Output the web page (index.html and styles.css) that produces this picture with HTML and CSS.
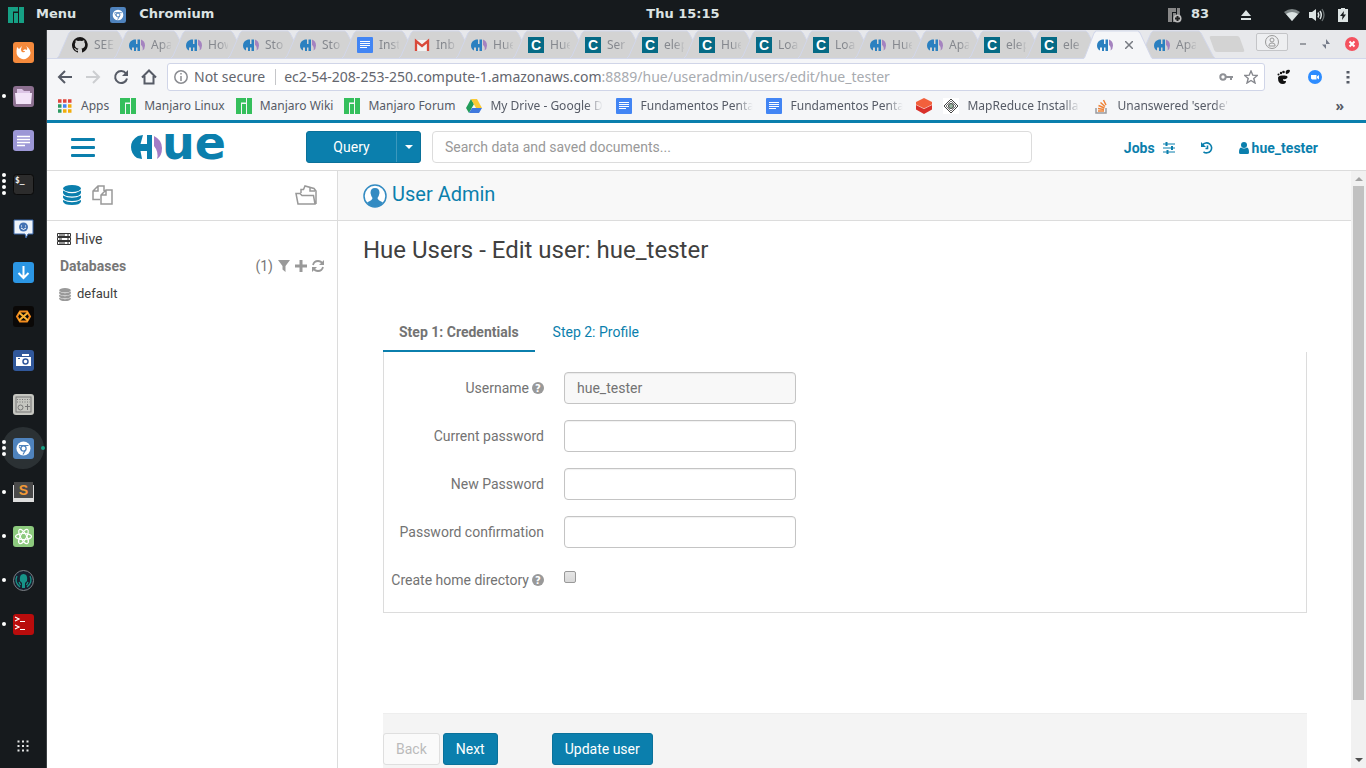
FILE: index.html
```html
<!DOCTYPE html>
<html lang="en">
<head>
<meta charset="utf-8">
<title>Hue - User Admin</title>
<link rel="stylesheet" href="styles.css">
</head>
<body>
<svg class="defs" aria-hidden="true">
  <symbol id="tab" viewBox="0 0 76 28" preserveAspectRatio="none"><path d="M0 28 L2 26 L12 3 L14 1 H60 L62 3 L74 26 L76 28"/></symbol>
  <symbol id="hue" viewBox="0 0 16 16"><path fill="#2b80c0" d="M5 2.500Q0 4 0 8.500Q0 12 3 13.500V10.500H5V14H7V10.500H8.500V14H11V2.500H8.500V7H7V2.500Z"/><path fill="#a583c0" d="M12 2.500Q16 4 16 8.500Q16 12 13.500 13.500Q14.500 10 12 8Z"/></symbol>
  <symbol id="doc" viewBox="0 0 16 16"><rect width="16" height="16" rx="1" fill="#4285f4"/><path stroke="#fff" d="M3 4.500h10M3 6.500h10M3 8.500h10M3 10.500h7"/></symbol>
  <symbol id="cdh" viewBox="0 0 16 16"><rect width="16" height="16" fill="#056a85"/><text x="8" y="13" text-anchor="middle" font-family="Liberation Sans" font-size="14" font-weight="bold" fill="#fff">C</text></symbol>
  <symbol id="manjaro" viewBox="0 0 16 16"><path fill="currentColor" d="M0 0H10V4.500H5V16H0ZM6 6H10V16H6ZM11 0H16V16H11Z"/></symbol>
  <symbol id="chromium" viewBox="0 0 21 21"><rect x="0" y="0" width="21" height="21" rx="3" fill="#4f83bd"/><circle cx="10.500" cy="10.500" r="7" fill="#fff"/><circle cx="10.500" cy="10.500" r="2.600" fill="none" stroke="#4f83bd" stroke-width="1.300"/><path fill="none" stroke="#4f83bd" stroke-width="1.200" d="M6 7.500H15.500M8.500 12L6 8.500M12.500 12L10 16.500"/></symbol>
  <symbol id="db" viewBox="0 0 18 20"><ellipse cx="9" cy="3.500" rx="9" ry="3.500"/><path d="M0 5.500Q9 11 18 5.500V8Q17 11.500 9 11.500T0 8ZM0 10.500Q9 15 18 10.500V12.500Q17 16 9 16T0 12.500ZM0 15Q9 19.500 18 15V16.500Q17 20 9 20T0 16.500Z"/></symbol>
  <symbol id="help" viewBox="0 0 12 12"><circle cx="6" cy="6" r="6" fill="#999"/><text x="6" y="10" text-anchor="middle" font-family="DejaVu Sans" font-size="10" font-weight="bold" fill="#fff">?</text></symbol>
</svg>

<header class="panel">
  <div class="panel-left">
    <svg class="i16 teal"><use href="#manjaro"/></svg><span class="menu-label">Menu</span>
    <svg class="i16 app-icon"><use href="#chromium"/></svg><span>Chromium</span>
  </div>
  <time>Thu 15:15</time>
  <div class="panel-right">
    <svg width="14" height="16" viewBox="0 0 14 16"><path fill="#888" d="M0 1H8V5H4V15H0ZM5 6H8V15H5ZM9 1H12V14H9Z"/><circle cx="9.500" cy="11.500" r="4" fill="#bbb"/><path stroke="#222" stroke-width="2" d="M7 11.500h5M9.500 9v5"/></svg>
    <span class="count">83</span>
    <svg class="eject" width="10" height="10" viewBox="0 0 10 10"><path fill="#dce3e3" d="M5 0L10 6H0ZM0 8H10V10H0Z"/></svg>
    <svg class="wifi" width="16" height="14" viewBox="0 0 16 14"><path fill="#7d8586" d="M8 13L0 4Q8-2 16 4Z"/><path fill="#dce3e3" d="M8 13L2 6Q8 2 14 6Z"/></svg>
    <svg class="sound" width="16" height="14" viewBox="0 0 16 14"><path fill="#dce3e3" d="M0 4H3L7 1V13L3 10H0Z"/><path fill="none" stroke="#dce3e3" stroke-width="1.500" d="M9 4.500Q10.500 7 9 9.500M11 3Q13.500 7 11 11"/><path fill="none" stroke="#697071" stroke-width="1.300" d="M13 1Q17 7 13 13"/></svg>
    <svg width="10" height="14" viewBox="0 0 10 14"><path fill="#dce3e3" d="M0 1H3V0H7V1H10V14H0Z"/><path fill="#161a1d" d="M6 3L2 8H4.500L4 12L8 6.500H5.500Z"/></svg>
  </div>
</header>

<div class="desktop">
<nav class="dock">
  <a href="#" class="app" title="Firefox"><svg viewBox="0 0 21 21"><rect width="21" height="21" rx="3" fill="#f58a3c"/><path fill="#fff" d="M4 5L6 7L9 4Q7 8 9 10Q12 11 12 9H10Q11 6 14 8Q15 6 13 4Q19 8 17 13Q14 18 9 17Q3 15 3.500 9Z"/></svg></a>
  <a href="#" class="app" title="Files"><span class="dots"><i></i></span><svg viewBox="0 0 21 21"><rect width="21" height="21" rx="3" fill="#8c7090"/><path fill="#dcc5e6" d="M4 3H9L11 5H17V8H4Z"/><path fill="#f2e4f8" d="M2 7H19L18 18H3Z"/></svg></a>
  <a href="#" class="app" title="Editor"><svg viewBox="0 0 21 21"><rect width="21" height="21" rx="3" fill="#9c97d6"/><path stroke="#fff" stroke-width="1.300" d="M4 6.500H17M4 9.500H17M4 12.500H17M4 15.500H12"/></svg></a>
  <a href="#" class="app" title="Terminal"><span class="dots"><i></i><i></i><i></i><i></i></span><svg viewBox="0 0 21 21"><rect x=".5" y=".5" width="20" height="20" rx="3" fill="#2c2c2c" stroke="#0b0b0b"/><text x="2" y="9" font-family="DejaVu Sans Mono" font-weight="bold" font-size="8" fill="#eee">$_</text></svg></a>
  <a href="#" class="app" title="Chat"><svg viewBox="0 0 21 21"><path fill="#eef4fb" stroke="#3665a8" d="M1 2H20V16H15L13 20L12 16H1Z"/><circle cx="10.500" cy="9" r="4.500" fill="#4472b3"/><path fill="none" stroke="#fff" d="M8 8h1M12 8h1M8 10Q10.500 13 13 10"/></svg></a>
  <a href="#" class="app" title="Downloads"><svg viewBox="0 0 21 21"><rect width="21" height="21" rx="3" fill="#2b96e4"/><path fill="none" stroke="#fff" stroke-width="2" d="M10.500 4V16M5.500 11L10.500 16L15.500 11"/></svg></a>
  <a href="#" class="app" title="Hex"><svg viewBox="0 0 21 21"><rect width="21" height="21" rx="3" fill="#0a0807"/><g fill="none" stroke="#f38b1d" stroke-width="2"><path d="M7 5.500H14L17 10.500L14 15.500H7L4 10.500Z"/><path stroke="#fbb335" d="M6 6.500L15 14.500M15 6.500L6 14.500"/></g></svg></a>
  <a href="#" class="app" title="Screenshot"><svg viewBox="0 0 21 21"><rect width="21" height="21" rx="3" fill="#31589b"/><path fill="#fff" d="M3 7H18V16H3ZM9 4H16V6H9Z"/><circle cx="12.500" cy="11.500" r="2.500" fill="#fff" stroke="#31589b" stroke-width="1.500"/><path fill="#31589b" d="M5 8h2v1H5z"/></svg></a>
  <a href="#" class="app" title="Devices"><svg viewBox="0 0 21 21"><rect width="21" height="21" rx="3" fill="#c5c6c0"/><rect x="3" y="3" width="15" height="15" fill="none" stroke="#777"/><path stroke="#777" stroke-dasharray="1 1.500" d="M4 5.500H17M4 8H17"/><circle cx="7.500" cy="13.500" r="2.500" fill="none" stroke="#777"/><path stroke="#777" d="M12 12.500H17M14.500 10V16"/></svg></a>
  <a href="#" class="app current" title="Chromium"><span class="dots"><i></i><i></i><i></i></span><svg viewBox="0 0 21 21"><use href="#chromium"/></svg></a>
  <a href="#" class="app" title="Sublime Text"><span class="dots"><i></i></span><svg viewBox="0 0 21 21"><path fill="#ddd" d="M0 3H21V20H0Z"/><path fill="#4a4a4a" d="M1 0H20V16H1Z"/><text x="10.500" y="13" text-anchor="middle" font-family="Liberation Sans" font-weight="bold" font-size="14" fill="#f49a35">S</text></svg></a>
  <a href="#" class="app" title="Atom"><span class="dots"><i></i></span><svg viewBox="0 0 21 21"><rect width="21" height="21" rx="3" fill="#8dca7e"/><g fill="none" stroke="#fff" stroke-width="1.200"><ellipse cx="10.500" cy="10.500" rx="8" ry="3"/><ellipse cx="10.500" cy="10.500" rx="8" ry="3" transform="rotate(60 10.500 10.500)"/><ellipse cx="10.500" cy="10.500" rx="8" ry="3" transform="rotate(120 10.500 10.500)"/></g></svg></a>
  <a href="#" class="app" title="GitKraken"><span class="dots"><i></i></span><svg viewBox="0 0 21 21"><circle cx="10.500" cy="10.500" r="10" fill="#17202f" stroke="#7e8388"/><path fill="#179489" d="M7 11Q6 4 10.500 4T14 11L12 13V18H9V13Z"/><path fill="none" stroke="#179489" stroke-width="1.300" d="M4 6Q1 12 7 17M17 6Q20 12 14 17M6 12L7.500 15M15 12L13.500 15"/></svg></a>
  <a href="#" class="app" title="Terminator"><span class="dots"><i></i></span><svg viewBox="0 0 21 21"><rect width="21" height="21" rx="3" fill="#b90c0c"/><path fill="none" stroke="#fff" stroke-width="1.200" d="M2 3L6 5L2 7M7 7.500H12M2 11L6 13L2 15M7 15.500H12"/></svg></a>
  <button class="all-apps" aria-label="Show applications"><svg width="12" height="12" viewBox="0 0 12 12"><path stroke="#e4e6e6" stroke-width="2" stroke-dasharray="2 2.500" d="M.5 1.500H12M.5 6H12M.5 10.500H12"/></svg></button>
</nav>

<div class="browser">
  <div class="tabstrip">
    <div class="tab"><svg class="shape"><use href="#tab"/></svg><svg class="i16" viewBox="0 0 16 16"><path fill="#181616" d="M8 0a8 8 0 0 0-2.500 15.600c.4 0 .5-.2.500-.4v-1.500c-2.200.5-2.700-1-2.700-1-.4-.9-.9-1.200-.9-1.200-.7-.5 0-.5 0-.5.800 0 1.300.8 1.300.8.700 1.300 1.900.9 2.300.7 0-.5.300-.9.500-1.100-1.800-.2-3.600-.9-3.600-4 0-.9.300-1.600.8-2.100-.1-.2-.4-1 .1-2.100 0 0 .7-.2 2.200.8a8 8 0 0 1 4 0c1.500-1 2.200-.8 2.200-.8.400 1.100.1 1.900.1 2.100.5.600.8 1.300.8 2.100 0 3.100-1.900 3.800-3.700 4 .3.200.6.700.6 1.500v2.200c0 .2.100.5.500.4A8 8 0 0 0 8 0z"/></svg><span>SEE</span></div>
    <div class="tab"><svg class="shape"><use href="#tab"/></svg><svg class="i16"><use href="#hue"/></svg><span>Apa</span></div>
    <div class="tab"><svg class="shape"><use href="#tab"/></svg><svg class="i16"><use href="#hue"/></svg><span>How</span></div>
    <div class="tab"><svg class="shape"><use href="#tab"/></svg><svg class="i16"><use href="#hue"/></svg><span>Sto</span></div>
    <div class="tab"><svg class="shape"><use href="#tab"/></svg><svg class="i16"><use href="#hue"/></svg><span>Sto</span></div>
    <div class="tab"><svg class="shape"><use href="#tab"/></svg><svg class="i16"><use href="#doc"/></svg><span>Inst</span></div>
    <div class="tab"><svg class="shape"><use href="#tab"/></svg><svg class="i16" viewBox="0 0 16 16"><path fill="#f2f2f2" d="M1 3H15V14H1Z"/><path fill="none" stroke="#d9493a" stroke-width="2.300" d="M2 14V4L8 9L14 4V14"/></svg><span>Inb</span></div>
    <div class="tab"><svg class="shape"><use href="#tab"/></svg><svg class="i16"><use href="#hue"/></svg><span>Hue</span></div>
    <div class="tab"><svg class="shape"><use href="#tab"/></svg><svg class="i16"><use href="#cdh"/></svg><span>Hue</span></div>
    <div class="tab"><svg class="shape"><use href="#tab"/></svg><svg class="i16"><use href="#cdh"/></svg><span>Ser</span></div>
    <div class="tab"><svg class="shape"><use href="#tab"/></svg><svg class="i16"><use href="#cdh"/></svg><span>elep</span></div>
    <div class="tab"><svg class="shape"><use href="#tab"/></svg><svg class="i16"><use href="#cdh"/></svg><span>Hue</span></div>
    <div class="tab"><svg class="shape"><use href="#tab"/></svg><svg class="i16"><use href="#cdh"/></svg><span>Loa</span></div>
    <div class="tab"><svg class="shape"><use href="#tab"/></svg><svg class="i16"><use href="#cdh"/></svg><span>Loa</span></div>
    <div class="tab"><svg class="shape"><use href="#tab"/></svg><svg class="i16"><use href="#hue"/></svg><span>Hue</span></div>
    <div class="tab"><svg class="shape"><use href="#tab"/></svg><svg class="i16"><use href="#hue"/></svg><span>Apa</span></div>
    <div class="tab"><svg class="shape"><use href="#tab"/></svg><svg class="i16"><use href="#cdh"/></svg><span>elep</span></div>
    <div class="tab"><svg class="shape"><use href="#tab"/></svg><svg class="i16"><use href="#cdh"/></svg><span>ele</span></div>
    <div class="tab active"><svg class="shape"><use href="#tab"/></svg><svg class="i16"><use href="#hue"/></svg><button class="close-tab" aria-label="Close tab"><svg width="8" height="8" viewBox="0 0 8 8"><path stroke="#777b82" stroke-width="1.500" d="M0 0L8 8M8 0L0 8"/></svg></button></div>
    <div class="tab"><svg class="shape"><use href="#tab"/></svg><svg class="i16"><use href="#hue"/></svg><span>Apa</span></div>
    <button class="new-tab" aria-label="New tab"></button>
    <div class="window-controls">
      <button class="profile" aria-label="Profile"><svg width="14" height="14" viewBox="0 0 14 14"><g fill="none" stroke="#999"><circle cx="7" cy="7" r="6.500"/><circle cx="7" cy="5" r="2"/><path d="M4 10Q4 8 7 8T10 10V11H4Z"/></g></svg></button>
      <button aria-label="Minimize"><svg width="8" height="14" viewBox="0 0 8 14"><path stroke="#9a9da3" stroke-width="2" d="M1 7H7"/></svg></button>
      <button aria-label="Restore"><svg width="8" height="14" viewBox="0 0 8 14"><path fill="#747a88" d="M4 2V7H8ZM0 7.500H4V12Z"/></svg></button>
      <button aria-label="Close"><svg width="14" height="14" viewBox="0 0 14 14"><circle cx="7" cy="7" r="7" fill="#f4525f"/><path stroke="#fff" stroke-width="2" d="M4.500 4.500L9.500 9.500M9.500 4.500L4.500 9.500"/></svg></button>
    </div>
  </div>

  <div class="toolbar">
    <button aria-label="Back"><svg class="i16" viewBox="0 0 16 16"><path d="M15 8H2M8 2L2 8L8 14"/></svg></button>
    <button aria-label="Forward" class="off"><svg class="i16" viewBox="0 0 16 16"><path d="M1 8H14M8 2L14 8L8 14"/></svg></button>
    <button aria-label="Reload"><svg class="i16" viewBox="0 0 16 16"><path d="M13 4.500A6 6 0 1 0 14 9.500"/><path class="solid" d="M15 1V7H9Z"/></svg></button>
    <button aria-label="Home"><svg class="i16" viewBox="0 0 16 16"><path d="M1 8.500L8 1.500L15 8.500M3.500 7V14.500H12.500V7"/></svg></button>
    <div class="omnibox">
      <svg width="14" height="14" viewBox="0 0 14 14"><circle cx="7" cy="7" r="6.200" fill="none" stroke="#8a8c91" stroke-width="1.500"/><path stroke="#8a8c91" stroke-width="1.500" d="M7 6V11M7 3V4.500"/></svg>
      <span class="secure">Not secure</span>
      <span class="url">ec2-54-208-253-250.compute-1.amazonaws.com<span>:8889/hue/useradmin/users/edit/hue_tester</span></span>
      <svg width="14" height="10" viewBox="0 0 14 10"><g fill="none" stroke="#8f9196" stroke-width="2"><circle cx="4" cy="5" r="2.700"/><path d="M7 5H14M12 5V8"/></g></svg>
      <svg width="14" height="14" viewBox="0 0 14 14"><path fill="none" stroke="#85878d" stroke-width="1.400" d="M7 1L8.800 5.200L13.300 5.500L9.800 8.500L11 13L7 10.500L3 13L4.200 8.500L.7 5.500L5.200 5.200Z"/></svg>
    </div>
    <svg class="ext" width="14" height="16" viewBox="0 0 14 16"><path d="M1 9Q1 6 6 6.500Q11 6 10.500 8.500Q9 11 6.500 10Q5 11 7 12H9Q9 15 6 15Q1 15 1 9ZM10 1Q13 0 13 2Q12 5 9 5Q8 2 10 1Z"/><circle cx="6.500" cy="3" r="1.300"/><circle cx="4" cy="4" r="1.200"/><circle cx="1.500" cy="5.500" r="1"/></svg>
    <svg class="ext" width="14" height="14" viewBox="0 0 14 14"><circle cx="7" cy="7" r="7" fill="#2d8cff"/><path fill="#fff" d="M3 5H8.500V9.500H4L3 8.500ZM9 6.500L11 5V9.500L9 8Z"/></svg>
    <button aria-label="Menu" class="kebab"><svg width="4" height="14" viewBox="0 0 4 14"><path class="solid" d="M.5 1h3v2.500h-3zM.5 6h3v2.500h-3zM.5 11h3v2.500h-3z"/></svg></button>
  </div>

  <nav class="bookmarks">
    <a href="#"><svg class="i16" viewBox="0 0 16 16"><g stroke-width="3.500" stroke-dasharray="3.500 1.500"><path stroke="#e0463b" d="M1 3H15"/><path stroke="#2c9a62" d="M1 8H5"/><path stroke="#4285f4" d="M6 8H10"/><path stroke="#f2ad0b" d="M11 8H15M6 13H15"/><path stroke="#2c9a62" d="M1 13H5"/></g></svg><span>Apps</span></a>
    <a href="#"><svg class="i16 green"><use href="#manjaro"/></svg><span>Manjaro Linux</span></a>
    <a href="#"><svg class="i16 green"><use href="#manjaro"/></svg><span>Manjaro Wiki</span></a>
    <a href="#"><svg class="i16 green"><use href="#manjaro"/></svg><span>Manjaro Forum</span></a>
    <a href="#"><svg class="i16" viewBox="0 0 16 16"><path fill="#219c5a" d="M5 1L8 6L3 15L0 10Z"/><path fill="#fbca36" d="M5 1H11L16 10H10Z"/><path fill="#3f78de" d="M6 10H16L13 15H3Z"/></svg><span class="long">My Drive - Google Drive</span></a>
    <a href="#"><svg class="i16"><use href="#doc"/></svg><span class="long">Fundamentos Pentaho</span></a>
    <a href="#"><svg class="i16"><use href="#doc"/></svg><span class="long">Fundamentos Pentaho</span></a>
    <a href="#" aria-label="Databricks"><svg class="i16" viewBox="0 0 16 16"><path fill="#d9302a" d="M0 7L8 11L16 7V11.500L8 16L0 11.500Z"/><path fill="#f2603c" d="M8 0L16 4V6.500L8 10.500L0 6.500V4Z"/></svg></a>
    <a href="#"><svg class="i16" viewBox="0 0 16 16"><path fill="#fff" d="M0 0H16V16H0Z"/><path fill="#fff" stroke="#444" d="M8 1L15 8L8 15L1 8Z"/><path fill="#fff" stroke="#777" d="M8 3L13 8L8 13L3 8Z"/><circle cx="8" cy="8" r="2.500" fill="#9bb8a2" stroke="#444"/></svg><span class="long">MapReduce Installation</span></a>
    <a href="#"><svg class="i16" viewBox="0 0 16 16"><path fill="none" stroke="#999b9e" stroke-width="1.500" d="M3 10V15H13V10"/><path stroke="#ef8236" stroke-width="1.500" d="M5 13H11M5 10.500L11 11.500M5.500 7.500L11.500 10M7.500 4.500L12 8.500M10.500 2L13 7"/></svg><span class="long">Unanswered 'serde' q</span></a>
    <button class="more" aria-label="More bookmarks">»</button>
  </nav>

  <div class="hue-header">
    <button class="hamburger" aria-label="Menu"><i></i><i></i><i></i></button>
    <a href="#" class="logo" aria-label="Hue"><svg width="97" height="26" viewBox="0 0 97 26"><path fill="#0b7fad" d="M7 2L12 1L9.500 10H16V1H21V25H16V17H9.500L11 25L6 24Q0 20 0 13T7 2Z"/><path fill="#a37cc6" d="M23 2Q31 6 31 14T26 25Q28 18 23 12Z"/><text x="31" y="25" font-family="DejaVu Sans" font-weight="bold" font-size="46" fill="#0b7fad">ue</text></svg></a>
    <div class="query"><button>Query</button><button class="caret" aria-label="More editors"><svg width="8" height="4" viewBox="0 0 8 4"><path fill="#fff" d="M0 0H8L4 4Z"/></svg></button></div>
    <input class="search" type="search" aria-label="Search" placeholder="Search data and saved documents...">
    <div class="user-links">
      <a href="#">Jobs <svg width="12" height="12" viewBox="0 0 12 12"><path stroke="#0b7fad" d="M0 2H12M0 6H12M0 10H12"/><path fill="#0b7fad" d="M2.500 0h2v4h-2zM8 4h2v4H8zM3.500 8h2v4h-2z"/></svg></a>
      <a href="#" aria-label="History"><svg width="12" height="12" viewBox="0 0 12 12"><g fill="none" stroke="#0b7fad" stroke-width="1.600"><path d="M1.500 3A5 5 0 1 1 2.500 9.800M6.500 3.500V6.500H4.500"/></g><path fill="#0b7fad" d="M0 0V5H5Z"/></svg></a>
      <a href="#" class="who"><svg width="10" height="12" viewBox="0 0 10 12"><circle cx="5" cy="3" r="3" fill="#0b7fad"/><path fill="#0b7fad" d="M2 5.500Q5 7.500 8 5.500Q10 6 10 10.500Q10 12 8.500 12H1.500Q0 12 0 10.500Q0 6 2 5.500Z"/></svg>hue_tester</a>
    </div>
  </div>

  <div class="workspace">
    <aside class="assist">
      <div class="assist-tabs">
        <button aria-label="Databases"><svg width="18" height="20" fill="#0b7fad"><use href="#db"/></svg></button>
        <button aria-label="Documents"><svg width="22" height="20" viewBox="0 0 22 20"><path fill="#fff" stroke="#999" stroke-width="1.500" d="M8 14.500H1V6L6 1H12V6M6 1V6H1M9 19V10L14 5H20V19ZM14 5V10H9"/></svg></button>
        <button class="right" aria-label="Files"><svg width="22" height="20" viewBox="0 0 22 20"><path fill="none" stroke="#999" stroke-width="1.500" d="M3 19L1 8.500H5L7 10.500H18.500L20 19ZM6 8V4.500H8.500L10 1L19 3.500L21 6V19M15 2V6H20"/></svg></button>
      </div>
      <div class="source"><svg width="14" height="12" viewBox="0 0 14 12"><path fill="none" stroke="#333" d="M.5 .5H13.500V3.500H.5ZM.5 4.500H13.500V7.500H.5ZM.5 8.500H13.500V11.500H.5ZM2 2H8M2 6H5M2 10H8M10 2H12M10 6H12M10 10H12"/></svg>Hive</div>
      <div class="db-head"><strong>Databases</strong><span>(1)</span>
        <svg width="12" height="12" viewBox="0 0 12 12"><path fill="#999" d="M0 0H12L7.500 6V12L4.500 9.500V6Z"/></svg>
        <svg width="12" height="12" viewBox="0 0 12 12"><path stroke="#999" stroke-width="3" d="M0 6H12M6 0V12"/></svg>
        <svg width="12" height="12" viewBox="0 0 12 12"><path fill="none" stroke="#999" stroke-width="1.800" d="M1 5Q2 1 6 1Q9 1 10.500 3.500M11 7Q10 11 6 11Q3 11 1.500 8.500"/><path fill="#999" d="M12 0V5H7ZM0 12V7H5Z"/></svg>
      </div>
      <a href="#" class="db"><svg width="12" height="13" fill="#999"><use href="#db"/></svg>default</a>
    </aside>

    <main>
      <div class="app-bar"><svg width="24" height="24" viewBox="0 0 24 24"><circle cx="12" cy="12" r="11" fill="#fff" stroke="#338bc2" stroke-width="1.500"/><path fill="#338bc2" d="M12 4Q16.500 4 16.500 9Q16 12 14.500 14Q14.500 16 20 18.500Q16.500 23 12 23T4 18.500Q9.500 16 9.500 14Q8 12 7.500 9Q7.500 4 12 4Z"/></svg><a href="#">User Admin</a></div>
      <div class="content">
        <h1>Hue Users - Edit user: hue_tester</h1>
        <form>
          <div class="steps"><a href="#" class="on">Step 1: Credentials</a><a href="#">Step 2: Profile</a></div>
          <div class="fields">
            <label for="u">Username <svg width="12" height="12"><use href="#help"/></svg></label><input id="u" type="text" value="hue_tester" readonly>
            <label for="p0">Current password</label><input id="p0" type="password">
            <label for="p1">New Password</label><input id="p1" type="password">
            <label for="p2">Password confirmation</label><input id="p2" type="password">
            <label for="h">Create home directory <svg width="12" height="12"><use href="#help"/></svg></label><input id="h" type="checkbox">
          </div>
          <div class="actions"><button type="button" class="btn" disabled>Back</button><button type="button" class="btn primary">Next</button><button type="button" class="btn primary update">Update user</button></div>
        </form>
      </div>
    </main>
    <div class="scrollbar"><i class="up"></i><i class="thumb"></i><i class="down"></i></div>
  </div>
</div>
</div>
</body>
</html>
```
FILE: styles.css
```css
* { box-sizing: border-box; }
body { margin: 0; height: 100vh; display: flex; flex-direction: column; overflow: hidden; background: #161a1d; font: 14px/20px Roboto, sans-serif; color: #404040; }
svg { display: block; flex: none; }
a { color: inherit; text-decoration: none; }
button { margin: 0; padding: 0; border: 0; background: none; font: inherit; color: inherit; }
.defs { display: none; }
.i16 { width: 16px; height: 16px; }
.teal { color: #16a085; }
.green { color: #35bf5c; }

.panel { flex: none; height: 30px; padding: 0 8px; display: grid; grid-template-columns: 1fr auto 1fr; align-items: center; font: bold 13px/20px "DejaVu Sans", sans-serif; color: #dce3e3; }
.panel time { padding-bottom: 2px; }
.panel-left span, .count { padding-bottom: 2px; }
.panel-left, .panel-right { display: flex; align-items: center; }
.panel-right { justify-content: flex-end; padding-right: 10px; }
.menu-label { margin: 0 34px 0 12px; }
.app-icon { margin-right: 13px; }
.count { margin: 0 32px 0 9px; }
.wifi { margin: 0 9px 0 33px; }
.sound { margin-right: 13px; }

.desktop { flex: 1; min-height: 0; display: flex; }
.dock { flex: none; width: 47px; display: flex; flex-direction: column; border-right: 1px solid #3d4144; }
.app { position: relative; height: 44px; display: flex; align-items: center; justify-content: center; }
.app > svg { width: 21px; height: 21px; z-index: 1; }
.dots { position: absolute; left: 2px; top: 0; bottom: 0; display: flex; flex-direction: column; justify-content: center; gap: 2px; z-index: 1; }
.dots i { width: 4px; height: 4px; border-radius: 2px; background: #fff; }
.current::before { content: ""; position: absolute; inset: 1px 2px; border-radius: 50%; background: #2b3134; }
.current::after { content: ""; position: absolute; right: 1px; top: 20px; width: 4px; height: 4px; border-radius: 50%; background: #16a085; z-index: 1; }
.all-apps { margin-top: auto; padding: 16px 17px; }

.browser { flex: 1; min-width: 0; display: flex; flex-direction: column; background: #f5f6f8; }
.tabstrip { flex: none; height: 29px; padding: 0 7px 0 10px; display: flex; align-items: center; background: #e7e8eb; border-bottom: 1px solid #d2d7ea; font: 12px/16px "Noto Sans", sans-serif; color: #85888e; }
.tab { position: relative; flex: none; width: 57px; height: 28px; padding: 2px 0 0 15px; display: flex; align-items: center; gap: 6px; }
.shape { position: absolute; left: 0; top: 0; width: 76px; height: 28px; fill: #d3d3d3; stroke: #d2d7ea; }
.tab .i16, .tab span { position: relative; z-index: 1; }
.tab span { flex: none; width: 20px; overflow: hidden; white-space: nowrap; mask-image: linear-gradient(90deg, #000 50%, rgba(0,0,0,.15)); }
.tab.active { z-index: 2; width: 56px; padding-left: 14px; gap: 12px; }
.tab.active .shape { width: 70px; height: 29px; fill: #f5f6f8; }
.close-tab { position: relative; }
.new-tab { width: 30px; height: 16px; margin-left: 16px; transform: skewX(20deg); border-radius: 2px; background: #d3d3d3; }
.window-controls { margin-left: auto; display: flex; align-items: center; gap: 15px; height: 24px; }
.profile { width: 32px; height: 18px; display: grid; place-items: center; border: 1px solid #c4c5c8; border-radius: 2px; background: #eeeff1; margin: 0 -4px 4px 0; }

.toolbar { flex: none; height: 36px; padding: 0 16px 0 10px; display: flex; align-items: center; gap: 12px; fill: none; stroke: #565b66; stroke-width: 2; }
.off { stroke: #ccced1; }
.solid { fill: #565b66; stroke: none; }
.omnibox { flex: 1; height: 28px; margin-left: -2px; padding: 0 6px; display: flex; align-items: center; gap: 11px; border: 1px solid #d0d5e8; border-radius: 3px; background: #fff; font: 14px/20px "Noto Sans", sans-serif; color: #63666e; }
.secure { margin: 0 -2px 0 -5px; padding-right: 10px; line-height: 16px; border-right: 1px solid #c5c6c9; }
.url { flex: 1; margin-left: -1px; white-space: nowrap; }
.url span { color: #a8abb0; }
.ext { fill: #111; stroke: none; margin-right: 5px; }
.kebab { margin-left: 7px; }
.bookmarks { flex: none; height: 25px; padding: 0 22px 3px 10px; display: flex; align-items: center; gap: 11px; font: 12px/16px "Noto Sans", sans-serif; color: #565b66; }
.bookmarks a { display: flex; align-items: center; gap: 8px; white-space: nowrap; }
.bookmarks .long { width: 115px; overflow: hidden; mask-image: linear-gradient(90deg, #000 84%, transparent 98%); }
.more { margin-left: auto; font-size: 14px; font-weight: bold; }

.hue-header { flex: none; height: 51px; padding: 0 48px 0 24px; display: flex; align-items: center; background: #fff; border-top: 3px solid #0b7fad; border-bottom: 1px solid #dcdcdc; }
.hamburger { width: 24px; padding-top: 2px; display: grid; gap: 5px; }
.hamburger i { height: 3px; border-radius: 1px; background: #0b7fad; }
.logo { margin: 0 78px 0 36px; }
.query { flex: none; display: flex; height: 32px; margin-right: 11px; border-radius: 3px; overflow: hidden; background: #0b7fad; color: #fff; border: 1px solid #0a719a; }
.query button { width: 89px; }
.query .caret { width: 24px; display: grid; place-items: center; border-left: 1px solid #3c98bd; }
.search { flex: 0 1 600px; min-width: 0; height: 32px; padding: 0 12px; border: 1px solid #dcdcdc; border-radius: 4px; font: inherit; color: #333; }
.search::placeholder { color: #999; }
.user-links { margin-left: auto; padding-top: 2px; display: flex; align-items: center; gap: 26px; font-weight: bold; color: #0b7fad; }
.user-links a { display: flex; align-items: center; gap: 8px; }
.user-links .who { gap: 3px; }

.workspace { flex: 1; min-height: 0; display: flex; background: #fff; }
.assist { flex: none; width: 291px; border-right: 1px solid #dcdcdc; }
.assist-tabs { height: 50px; padding: 0 20px 2px 16px; display: flex; align-items: center; gap: 11px; border-bottom: 1px solid #dcdcdc; }
.right { margin-left: auto; }
.source { padding: 8px 10px 0; display: flex; align-items: center; gap: 4px; }
.db-head { padding: 7px 13px 9px; display: flex; align-items: center; gap: 5px; color: #777; }
.db-head strong { margin-right: auto; }
.db { padding-left: 12px; display: flex; align-items: center; gap: 6px; font-size: 13px; line-height: 18px; }

main { flex: 1; min-width: 0; overflow: hidden; }
.app-bar { height: 50px; padding-left: 25px; display: flex; align-items: center; gap: 5px; background: #f8f8f8; border-bottom: 1px solid #dcdcdc; font-size: 20px; color: #0b7fad; }
.app-bar a { padding-bottom: 4px; }
.content { padding: 13px 44px 0 25px; }
h1 { margin: 0 0 56px; font-size: 24px; line-height: 32px; font-weight: 400; color: #404040; }
form { margin-left: 20px; }
.steps { display: flex; align-items: flex-end; color: #0b7fad; }
.steps a { padding: 0 16px 8px; line-height: 20px; border-bottom: 2px solid transparent; margin-right: 2px; }
.steps .on { font-weight: bold; color: #737373; border-color: #0b7fad; }
.fields { padding: 20px 0 16px; display: grid; grid-template-columns: 160px 232px; column-gap: 20px; row-gap: 16px; grid-auto-rows: 32px; align-items: center; border: 1px solid #dcdcdc; border-top: 0; color: #737373; }
.fields label { display: flex; justify-content: flex-end; align-items: center; gap: 3px; white-space: nowrap; }
.fields input:not([type=checkbox]) { height: 32px; padding: 0 12px; border: 1px solid #c4c4c4; border-radius: 4px; box-shadow: inset 0 1px 1px rgba(0,0,0,.06); font: inherit; color: #737373; }
.fields input[readonly] { background: #f8f8f8; }
.fields input[type=checkbox] { appearance: none; width: 12px; height: 12px; margin: 0 0 6px; border: 1px solid #999; border-radius: 2px; background: linear-gradient(#e6e6e6, #d8d8d8); }
.actions { margin-top: 100px; height: 72px; padding-top: 19px; display: flex; align-items: flex-start; gap: 3px; background: #f4f4f4; border-top: 1px solid #eee; }
.btn { height: 32px; padding: 0 12px; border: 1px solid #dfdfdf; border-radius: 3px; background: #fafafa; color: #bbb; }
.primary { background: #0b7fad; border-color: #0a719a; color: #fff; }
.update { margin-left: 51px; }
.scrollbar { flex: none; width: 15px; display: flex; flex-direction: column; align-items: center; background: #f1f1f1; }
.thumb { width: 11px; flex: 1; margin: 5px 0 58px; background: #c1c1c1; }
.up, .down { border: 4px solid transparent; }
.up { margin-top: 2px; border-bottom-color: #a3a3a3; }
.down { margin-bottom: 2px; border-top-color: #505050; }
```
